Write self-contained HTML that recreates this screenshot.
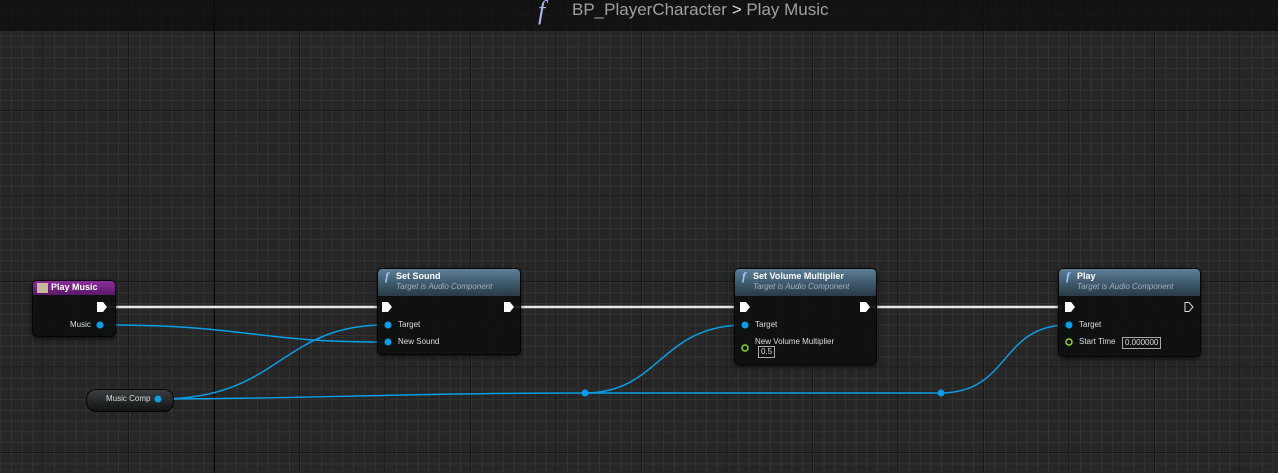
<!DOCTYPE html>
<html><head><style>
body{margin:0;width:1278px;height:473px;overflow:hidden;background:#262626;font-family:"Liberation Sans",sans-serif}
.node{position:absolute;background:rgba(14,16,16,.93);border:1px solid #050505;border-radius:5px;box-shadow:0 2px 4px rgba(0,0,0,.6)}
.hd{border-radius:4px 4px 0 0;color:#fff;font-size:9px;font-weight:bold;padding:2px 4px 0 18px;position:relative}
.blue{height:25px;background:linear-gradient(#5d7f97,#3a5467 60%,#2a3a45)}
.sub{display:block;font-weight:normal;font-style:italic;color:#9fb3bf;font-size:8px;margin-left:0;margin-top:1px}
.f{position:absolute;left:7px;top:0;font-family:"Liberation Serif",serif;font-style:italic;color:#9cc8ff;font-size:12px}
.t{position:absolute;color:#ddd;font-size:8px}
.box{position:absolute;border:1px solid #aaa;color:#ddd;font-size:8px;padding:0 2px;line-height:10px}
</style></head><body>
<svg width="1278" height="473" style="position:absolute;left:0;top:0">
<defs>
<pattern id="mi" x="0.4" y="3.7" width="10.69" height="10.69" patternUnits="userSpaceOnUse"><path d="M0.5 0V10.69M0 0.5H10.69" stroke="#343434" stroke-width="1" fill="none"/></pattern>
<pattern id="ma" x="42.5" y="24.5" width="85.5" height="85.5" patternUnits="userSpaceOnUse"><path d="M0.5 0V85.5M0 0.5H85.5" stroke="#171717" stroke-width="1" fill="none"/></pattern>
</defs>
<rect width="1278" height="473" fill="#262626"/>
<rect width="1278" height="473" fill="url(#mi)"/>
<rect width="1278" height="473" fill="url(#ma)"/>
<line x1="214.5" y1="0" x2="214.5" y2="473" stroke="#050505"/>
<rect width="1278" height="31" fill="#0c0c0c" opacity="0.75"/>
<g stroke="#e8e8e8" stroke-width="2.5" fill="none">
<line x1="108" y1="307" x2="380" y2="307"/><line x1="515" y1="307" x2="737" y2="307"/><line x1="870" y1="307" x2="1061" y2="307"/>
</g>
<g stroke="#0a9ee6" stroke-width="1.5" fill="none">
<path d="M103 325C250 325 250 342 385 342"/>
<path d="M160 399C280 399 280 325 385 325"/>
<path d="M160 399C300 399 400 393 585 393L941 393"/>
<path d="M585 393C660 393 660 325 745 325"/>
<path d="M941 393C1010 393 1000 325 1068 325"/>
</g>
<circle cx="585" cy="393" r="3.5" fill="#0a9ee6"/><circle cx="941" cy="393" r="3.5" fill="#0a9ee6"/>
</svg>
<div style="position:absolute;left:538px;top:-4px;font-family:'Liberation Serif',serif;font-style:italic;font-size:26px;color:#aab8e8">f</div>
<div style="position:absolute;left:572px;top:0;font-size:17px;color:#a0a0a0">BP_PlayerCharacter <span style="color:#ddd">&gt;</span> Play Music</div>

<div class="node" style="left:32px;top:280px;width:82px;height:55px">
<div class="hd" style="height:13px;background:linear-gradient(#8a2c9a,#5a1a68);padding-top:1px">Play Music<span style="position:absolute;left:4px;top:2px;width:11px;height:10px;background:#c8b89a"></span></div>
</div>
<div class="node" style="left:377px;top:268px;width:142px;height:85px"><div class="hd blue"><span class="f">f</span>Set Sound<span class="sub">Target is Audio Component</span></div></div>
<div class="node" style="left:734px;top:268px;width:141px;height:95px"><div class="hd blue"><span class="f">f</span>Set Volume Multiplier<span class="sub">Target is Audio Component</span></div></div>
<div class="node" style="left:1058px;top:268px;width:141px;height:87px"><div class="hd blue"><span class="f">f</span>Play<span class="sub">Target is Audio Component</span></div></div>
<div style="position:absolute;left:86px;top:389px;width:86px;height:21px;border-radius:10px;background:linear-gradient(#3a3e40,#121414);border:1px solid #050505"></div>
<div class="t" style="left:106px;top:394px">Music Comp</div>

<svg width="1278" height="473" style="position:absolute;left:0;top:0">
<g fill="#fff">
<path d="M97 302h6l4 5-4 5h-6z"/>
<path d="M382 302h6l4 5-4 5h-6z"/><path d="M504 302h6l4 5-4 5h-6z"/>
<path d="M740 302h6l4 5-4 5h-6z"/><path d="M860 302h6l4 5-4 5h-6z"/>
<path d="M1065 302h6l4 5-4 5h-6z"/>
</g>
<path d="M1185 302.5h4l4 4.5-4 4.5h-4z" fill="none" stroke="#ddd"/>
<g fill="#0a9ee6">
<circle cx="100" cy="325" r="3.5"/><circle cx="158" cy="399" r="3.5"/>
<circle cx="388" cy="325" r="3.5"/><circle cx="388" cy="342" r="3.5"/>
<circle cx="745" cy="325" r="3.5"/><circle cx="1069" cy="325" r="3.5"/>
</g>
<circle cx="745" cy="348" r="3" fill="none" stroke="#8fd42a" stroke-width="1.5"/>
<circle cx="1069" cy="342" r="3" fill="none" stroke="#8fd42a" stroke-width="1.5"/>
</svg>
<div class="t" style="left:70px;top:320px">Music</div>
<div class="t" style="left:398px;top:320px">Target</div>
<div class="t" style="left:398px;top:337px">New Sound</div>
<div class="t" style="left:755px;top:320px">Target</div>
<div class="t" style="left:755px;top:337px">New Volume Multiplier</div>
<div class="box" style="left:758px;top:346px">0.5</div>
<div class="t" style="left:1079px;top:320px">Target</div>
<div class="t" style="left:1079px;top:337px">Start Time</div>
<div class="box" style="left:1122px;top:337px">0.000000</div>
</body></html>
